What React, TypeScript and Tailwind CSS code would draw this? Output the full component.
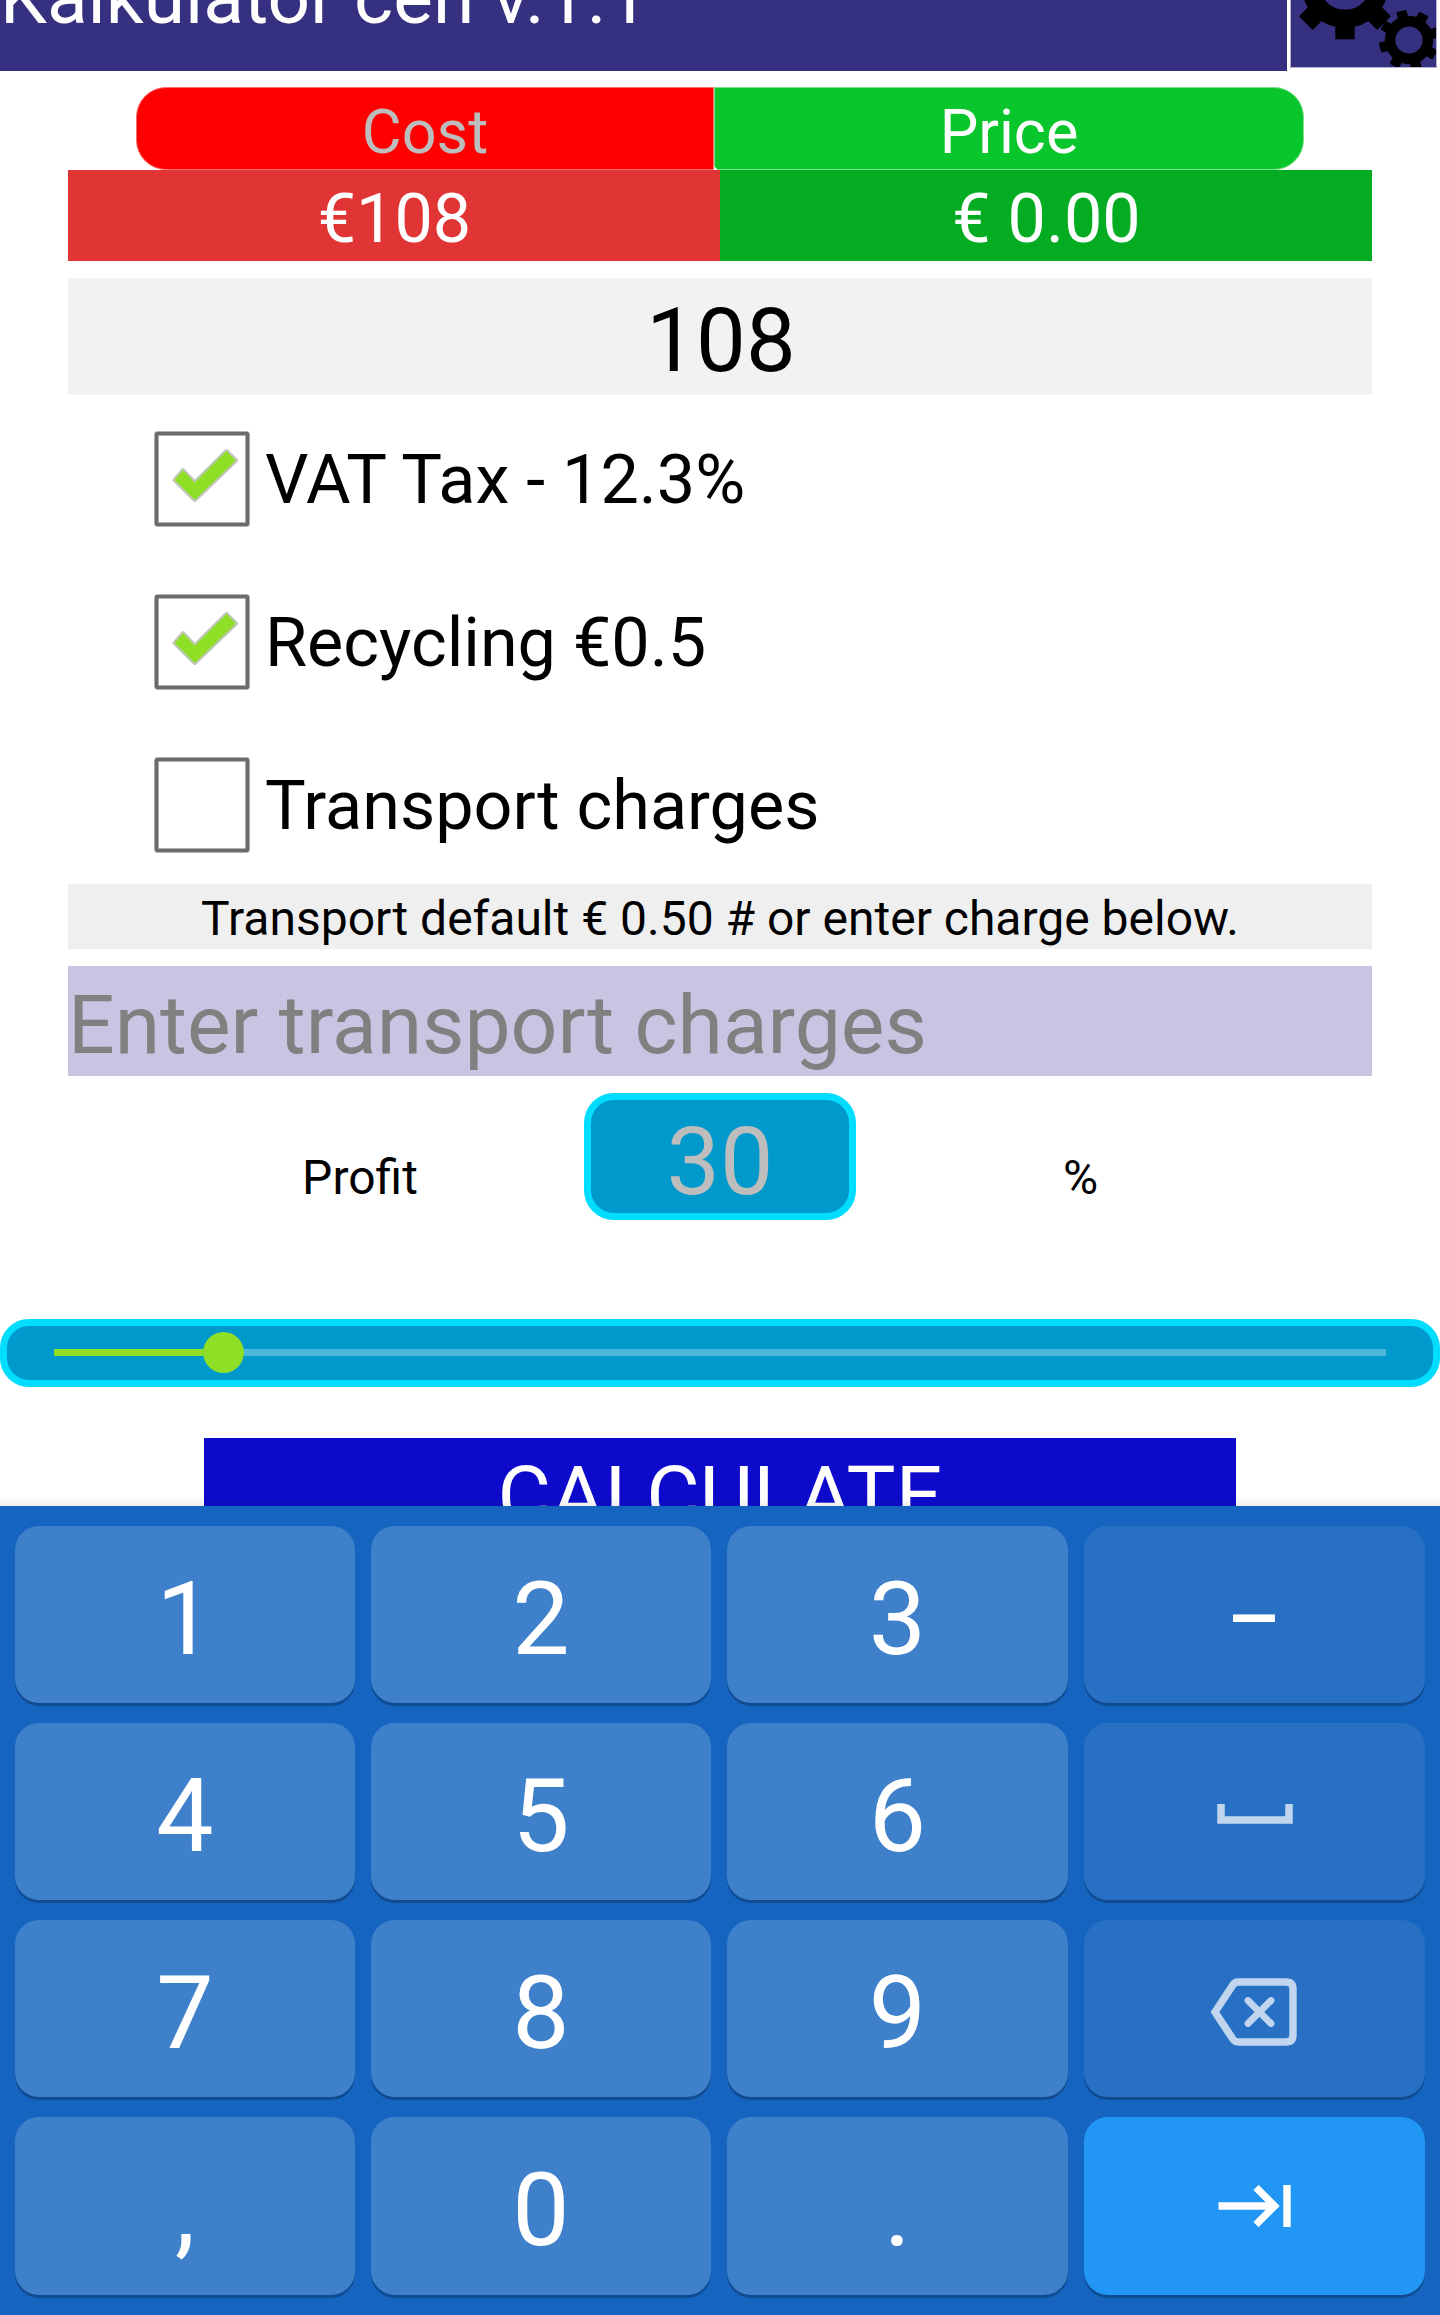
import React from "react";

const BIG_TEETH = [45, 90, 135];
const SMALL_TEETH = [-105, -60, -15, 30, 75, 120, 165, 210];

function Gears() {
  return (
    <svg width="147" height="68" viewBox="1290 0 147 68" className="block">
      <circle cx="1345" cy="-16" r="34.7" fill="none" stroke="#000" strokeWidth="18" />
      {BIG_TEETH.map((a) => (
        <rect key={a} x="38" y="-9.7" width="17.3" height="19.4" transform={`translate(1345 -16) rotate(${a})`} />
      ))}
      <circle cx="1409" cy="40" r="18.900" fill="none" stroke="#000" strokeWidth="10.600" />
      {SMALL_TEETH.map((a) => (
        <rect key={a} x="20" y="-5.2" width="10" height="10.400" rx="1" transform={`translate(1409 40) rotate(${a})`} />
      ))}
      <path d="M1290.5 0V67.5H1436.5V0" fill="none" stroke="#b5b3d0" />
    </svg>
  );
}

function CheckRow({ label, checked }: { label: string; checked: boolean }) {
  return (
    <label className="flex h-[163px] items-center gap-[15px]">
      <svg width="96" height="96" viewBox="0 0 96 96" className="block shrink-0">
        <rect x="2.500" y="2.500" width="91" height="91" rx="1" fill="#fff" stroke="#c9c9cb" strokeWidth="5" />
        <rect x="2.500" y="2.500" width="91" height="91" rx="1" fill="none" stroke="#6b6b6b" strokeWidth="3.600" />
        {checked && (
          <path
            d="M20.500 49L29 39L40.800 51.500L72.500 20L82 29.500L40.800 69Z"
            fill="#90df27"
            stroke="#c3c6be"
            strokeWidth="4"
            strokeLinejoin="round"
            className="[paint-order:stroke]"
          />
        )}
      </svg>
      <span className="relative top-[1px] text-[68.3px] leading-[80px] text-black">{label}</span>
    </label>
  );
}

const SpaceIcon = () => (
  <svg width="78" height="24" viewBox="0 0 78 24" className="relative top-[2px]">
    <path d="M5 2V18H73V2" fill="none" stroke="#c1d6ee" strokeWidth="7.500" />
  </svg>
);

const BackspaceIcon = () => (
  <svg width="86" height="68" viewBox="0 0 86 68" className="relative -left-[1px] top-[3px]">
    <path
      d="M4 34L21.500 7.500Q23.500 4 27.500 4H75Q82 4 82 11V57Q82 64 75 64H27.500Q23.500 64 21.500 60.500Z"
      fill="none"
      stroke="#c1d6ee"
      strokeWidth="7.400"
    />
    <path d="M37 22.500L60 45.500M60 22.500L37 45.500" fill="none" stroke="#c1d6ee" strokeWidth="6.800" strokeLinecap="round" />
  </svg>
);

const NextIcon = () => (
  <svg width="74" height="42" viewBox="0 0 74 42" className="relative">
    <path d="M0.500 21H56M38 2.500L56.500 21L38 39.500" fill="none" stroke="#fff" strokeWidth="7.400" />
    <path d="M69 0V42" stroke="#fff" strokeWidth="7.400" />
  </svg>
);

type KeyDef = { id: string; content: React.ReactNode; kind: "num" | "fn" | "go" };

const KEYS: KeyDef[] = [
  { id: "1", content: "1", kind: "num" },
  { id: "2", content: "2", kind: "num" },
  { id: "3", content: "3", kind: "num" },
  { id: "minus", content: <span className="relative top-[4px] scale-x-[0.84]">–</span>, kind: "fn" },
  { id: "4", content: "4", kind: "num" },
  { id: "5", content: "5", kind: "num" },
  { id: "6", content: "6", kind: "num" },
  { id: "space", content: <SpaceIcon />, kind: "fn" },
  { id: "7", content: "7", kind: "num" },
  { id: "8", content: "8", kind: "num" },
  { id: "9", content: "9", kind: "num" },
  { id: "back", content: <BackspaceIcon />, kind: "fn" },
  { id: "comma", content: ",", kind: "num" },
  { id: "0", content: "0", kind: "num" },
  { id: "dot", content: ".", kind: "num" },
  { id: "next", content: <NextIcon />, kind: "go" },
];

const KIND = { num: "bg-[#3f80ca]", fn: "bg-[#2770c4]", go: "bg-[#2196f5]" };

export default function App() {
  return (
    <div className="flex h-[2315px] w-[1440px] flex-col overflow-hidden bg-white font-[Roboto,sans-serif] text-black">
      <header className="flex h-[87px] items-start gap-[3px]">
        <div className="h-[71px] w-[1287px] overflow-hidden bg-[#35307f]">
          <h1 className="-mt-[42px] text-[74.8px] leading-[80px] font-normal whitespace-nowrap text-white">Kalkulator cen v.1.1</h1>
        </div>
        <button className="block h-[68px] w-[147px] bg-[#35307f]">
          <Gears />
        </button>
      </header>

      <main className="flex h-[1419px] flex-col overflow-hidden">
        <div className="flex h-[83px] px-[136px] text-center text-[61.2px] leading-[89px]">
          <div className="w-[578px] rounded-l-[30px] border border-[#ff7070] bg-[#ff0000] text-[#bdbdbd]">Cost</div>
          <div className="w-[590px] rounded-r-[30px] rounded-bl-[5px] border border-[#7fe08c] bg-[#0ac62d] text-white">Price</div>
        </div>
        <div className="mx-[68px] flex h-[91px] text-center text-[68.3px] leading-[99px] text-white">
          <div className="w-[652px] bg-[#e13535] pl-[1px]">€108</div>
          <div className="w-[652px] bg-[#04ac22] pl-[1px]">€ 0.00</div>
        </div>
        <div className="mx-[68px] mt-[17px] h-[117px] bg-[#f2f2f5] pl-[2px] text-center text-[88.600px] leading-[126px]">108</div>

        <div className="mt-[2px] flex h-[489px] flex-col pl-[154px]">
          <CheckRow label="VAT Tax - 12.3%" checked />
          <CheckRow label="Recycling €0.5" checked />
          <CheckRow label="Transport charges" checked={false} />
        </div>

        <div className="mx-[68px] -mt-[2px] h-[65px] bg-[#efefef] text-center text-[48px] leading-[70px]">
          Transport default € 0.50 # or enter charge below.
        </div>
        <div className="mx-[68px] mt-[17px] h-[110px] bg-[#c8c4e1] text-[82.2px] leading-[118px] text-[#808080]">
          Enter transport charges
        </div>

        <div className="mx-[136px] mt-[17px] flex h-[127px] text-center">
          <div className="w-[448px] text-[48px] leading-[170px]">Profit</div>
          <div className="w-[272px] rounded-[30px] border-[7px] border-[#00ddff] bg-[#0099cc] text-[95.2px] leading-[123px] text-[#bdbdbd]">
            30
          </div>
          <div className="w-[448px] pl-[1px] text-[48px] leading-[170px]">%</div>
        </div>

        <div className="mt-[99px] flex h-[68px] shrink-0 items-center rounded-[29px] border-[7px] border-[#00ddff] bg-[#0099cc] px-[47px] pb-[1px]">
          <div className="h-[7px] w-[149px] bg-[#90df27]" />
          <div className="h-[41px] w-[41px] rounded-full bg-[#90df27]" />
          <div className="h-[7px] flex-1 bg-[#4db7dc]" />
        </div>

        <button className="mx-[204px] mt-[51px] h-[120px] shrink-0 bg-[#0d0acb] text-[82.2px] leading-[116px] text-white">
          <span className="block h-[120px]">CALCULATE</span>
        </button>
      </main>

      <section className="relative grid h-[809px] grid-cols-[340px_340px_341px_341px] grid-rows-[177px_177px_177px_178px] gap-x-[16px] gap-y-[20px] bg-[#1565c0] pt-[20px] pl-[15px]">
        <div className="absolute -top-[10px] left-0 h-[10px] w-full bg-linear-to-t from-[#0a2a1c]/7 to-transparent" />
        {KEYS.map((k) => (
          <button
            key={k.id}
            className={`flex items-center justify-center rounded-[24px] text-[102px] leading-[120px] text-white shadow-[0_3px_0_#104b91] ${KIND[k.kind]}`}
          >
            {typeof k.content === "string" ? <span className="relative top-[4px]">{k.content}</span> : k.content}
          </button>
        ))}
      </section>
    </div>
  );
}
